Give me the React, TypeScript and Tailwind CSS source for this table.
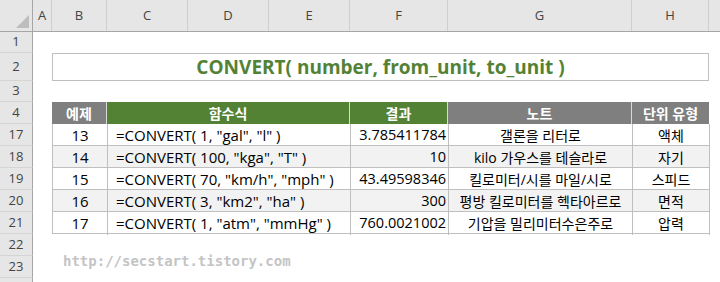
import React from "react"

const cols = [
  { name: "A", w: "w-[19px]" },
  { name: "B", w: "w-[55px]" },
  { name: "C", w: "w-[81px]" },
  { name: "D", w: "w-[81px]" },
  { name: "E", w: "w-[81px]" },
  { name: "F", w: "w-[98px]" },
  { name: "G", w: "w-[184px]" },
  { name: "H", w: "w-[77px]" },
]

const rows = [
  { id: 17, n: "13", f: '=CONVERT( 1, "gal", "l" )', r: "3.785411784", note: "갤론을 리터로", unit: "액체" },
  { id: 18, n: "14", f: '=CONVERT( 100, "kga", "T" )', r: "10", note: "kilo 가우스를 테슬라로", unit: "자기" },
  { id: 19, n: "15", f: '=CONVERT( 70, "km/h", "mph" )', r: "43.49598346", note: "킬로미터/시를 마일/시로", unit: "스피드" },
  { id: 20, n: "16", f: '=CONVERT( 3, "km2", "ha" )', r: "300", note: "평방 킬로미터를 헥타아르로", unit: "면적" },
  { id: 21, n: "17", f: '=CONVERT( 1, "atm", "mmHg" )', r: "760.0021002", note: "기압을 밀리미터수은주로", unit: "압력" },
]

const font = "font-['Open_Sans','Noto_Sans_CJK_KR',sans-serif]"

function RowNum({ n, h }: { n: string; h: string }) {
  return (
    <div className={`flex ${h} w-[33px] shrink-0 items-center justify-center border-b border-r border-b-[#d5d5d5] border-r-[#a6a6a6] bg-[#e6e6e6] text-[13px] text-[#444]`}>
      {n}
    </div>
  )
}

function SheetRow({ n, h, children }: { n: string; h: string; children?: React.ReactNode }) {
  return (
    <div className={`flex ${h}`}>
      <RowNum n={n} h={h} />
      <div className="w-[19px] shrink-0" />
      <div className="w-[657px] shrink-0">{children}</div>
    </div>
  )
}

export default function App() {
  return (
    <div className={`h-[282px] w-[720px] overflow-hidden bg-white ${font}`}>
      {/* column letters */}
      <div className="flex h-[32px] border-b border-[#a6a6a6] bg-[#e6e6e6] text-[13px] text-[#444]">
        <div className="relative w-[33px] shrink-0 border-r border-[#a6a6a6]">
          <svg className="absolute bottom-[3px] right-[3px]" width="13" height="13" viewBox="0 0 13 13">
            <polygon points="13,0 13,13 0,13" fill="#bdbdbd" />
          </svg>
        </div>
        {cols.map((c) => (
          <div key={c.name} className={`${c.w} flex shrink-0 items-center justify-center border-r border-[#cfcfcf]`}>
            {c.name}
          </div>
        ))}
        <div className="flex-1" />
      </div>

      <SheetRow n="1" h="h-[21px]" />
      <SheetRow n="2" h="h-[28px]">
        <div className="flex h-full items-center justify-center border border-[#bfbfbf] text-[19px] font-bold text-[#548235]">
          CONVERT( number, from_unit, to_unit )
        </div>
      </SheetRow>
      <SheetRow n="3" h="h-[21px]" />
      <SheetRow n="4" h="h-[22px]">
        <div className="grid h-full grid-cols-[55px_243px_98px_184px_77px] text-[14px] font-bold text-white">
          <div className="flex items-center justify-center border-r border-[#d9d9d9] bg-[#7f7f7f]">예제</div>
          <div className="flex items-center justify-center border-r border-[#d9d9d9] bg-[#548235]">함수식</div>
          <div className="flex items-center justify-center border-r border-[#d9d9d9] bg-[#548235]">결과</div>
          <div className="flex items-center justify-center border-r border-[#d9d9d9] bg-[#7f7f7f]">노트</div>
          <div className="flex items-center justify-center bg-[#7f7f7f]">단위 유형</div>
        </div>
      </SheetRow>
      {rows.map((r, i) => (
        <SheetRow key={r.id} n={String(r.id)} h="h-[22px]">
          <div
            className={`grid h-full grid-cols-[55px_243px_98px_184px_77px] border-b border-l border-[#bfbfbf] text-[15px] text-black ${
              i % 2 === 1 ? "bg-[#f2f2f2]" : "bg-white"
            }`}
          >
            <div className="flex items-center justify-center border-r border-[#bfbfbf]">{r.n}</div>
            <div className="flex items-center border-r border-[#bfbfbf] pl-[8px]">{r.f}</div>
            <div className="flex items-center justify-end border-r border-[#bfbfbf] pr-[2px] text-[14.5px]">{r.r}</div>
            <div className="flex items-center justify-center border-r border-[#bfbfbf] text-[14px]">{r.note}</div>
            <div className="flex items-center justify-center border-r border-[#bfbfbf] text-[14px]">{r.unit}</div>
          </div>
        </SheetRow>
      ))}
      <SheetRow n="22" h="h-[22px]" />
      <SheetRow n="23" h="h-[22px]">
        <div className="-mt-[5px] ml-[11px] font-['DejaVu_Sans_Mono',monospace] text-[14px] font-bold text-[#c4c4c4]">
          http://secstart.tistory.com
        </div>
      </SheetRow>
      <SheetRow n="" h="h-[22px]" />
    </div>
  )
}
